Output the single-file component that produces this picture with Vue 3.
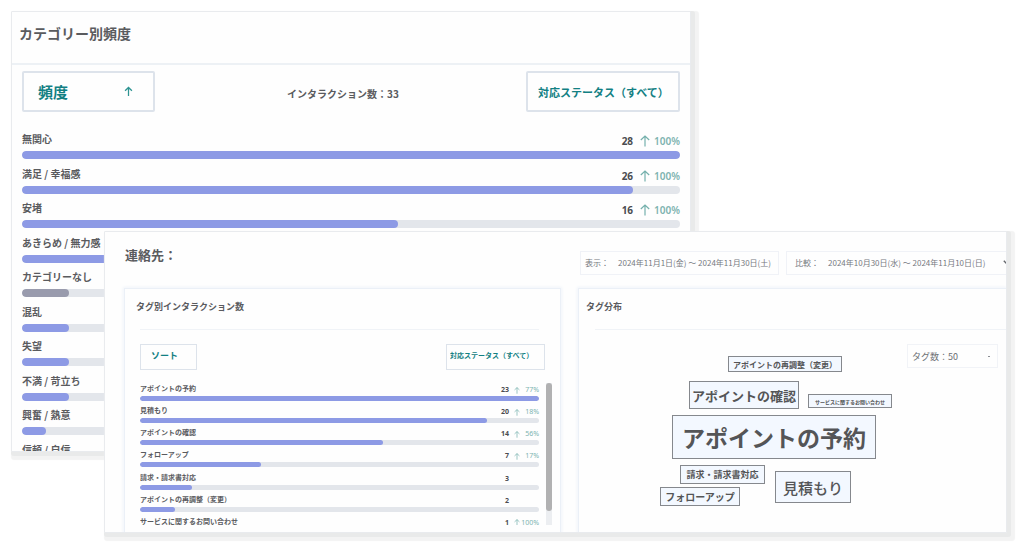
<script setup>
import { ref } from 'vue'

const categories = [
  { label: '無関心', count: 28, change: '100%' },
  { label: '満足 / 幸福感', count: 26, change: '100%' },
  { label: '安堵', count: 16, change: '100%' },
  { label: 'あきらめ / 無力感', count: 8 },
  { label: 'カテゴリーなし', count: 2, muted: true },
  { label: '混乱', count: 2 },
  { label: '失望', count: 2 },
  { label: '不満 / 苛立ち', count: 2 },
  { label: '興奮 / 熱意', count: 1 },
  { label: '信頼 / 自信', count: 1 },
]

const tags = [
  { label: 'アポイントの予約', count: 23, change: '77%' },
  { label: '見積もり', count: 20, change: '18%' },
  { label: 'アポイントの確認', count: 14, change: '56%' },
  { label: 'フォローアップ', count: 7, change: '17%' },
  { label: '請求・請求書対応', count: 3 },
  { label: 'アポイントの再調整（変更）', count: 2 },
  { label: 'サービスに関するお問い合わせ', count: 1, change: '100%' },
]

const share = (rows, row) => ({ width: (row.count / rows[0].count) * 100 + '%' })

const categoryStatus = ref('all')
const tagStatus = ref('all')
const tagLimit = ref('50')
</script>

<template>
  <main class="desktop">
    <section class="window categories">
      <header class="categories-header">
        <h2>カテゴリー別頻度</h2>
      </header>
      <div class="toolbar">
        <button type="button" class="control sort-frequency">
          <span>頻度</span>
          <svg class="sort-arrow" viewBox="0 0 10 12" aria-hidden="true">
            <path d="M5 11V1.5M1.2 5.2 5 1.5l3.8 3.7" />
          </svg>
        </button>
        <p class="total">インタラクション数：33</p>
        <select v-model="categoryStatus" class="control status" aria-label="対応ステータス">
          <option value="all">対応ステータス（すべて）</option>
        </select>
      </div>
      <ul class="rows category-rows">
        <li v-for="row in categories" :key="row.label">
          <div class="row-head">
            <span class="row-label">{{ row.label }}</span>
            <span v-if="row.change" class="row-values">
              <span class="count">{{ row.count }}</span>
              <svg class="arrow" viewBox="0 0 10 12" aria-hidden="true">
                <path d="M5 11.5V1M.8 5 5 1l4.2 4" />
              </svg>
              <span class="change">{{ row.change }}</span>
            </span>
          </div>
          <div class="bar">
            <div class="fill" :class="{ muted: row.muted }" :style="share(categories, row)"></div>
          </div>
        </li>
      </ul>
    </section>

    <section class="window contacts">
      <header class="contacts-header">
        <h2>連絡先：</h2>
        <div class="dates">
          <button type="button" class="date">
            <span>表示：</span>
            <span>2024年11月1日(金) ～ 2024年11月30日(土)</span>
          </button>
          <button type="button" class="date compare">
            <span>比較：</span>
            <span>2024年10月30日(水) ～ 2024年11月10日(日)</span>
            <svg class="chevron" viewBox="0 0 6 4" aria-hidden="true">
              <path d="M.8.8 3 3 5.2.8" />
            </svg>
          </button>
        </div>
      </header>
      <div class="panels">
        <article class="panel">
          <h3>タグ別インタラクション数</h3>
          <div class="panel-tools">
            <button type="button" class="control sort-tags">ソート</button>
            <select v-model="tagStatus" class="control tag-status" aria-label="対応ステータス">
              <option value="all">対応ステータス（すべて）</option>
            </select>
          </div>
          <div class="scroll-area">
            <ul class="rows tag-rows">
              <li v-for="row in tags" :key="row.label">
                <div class="row-head">
                  <span class="row-label">{{ row.label }}</span>
                  <span class="row-values">
                    <span class="count">{{ row.count }}</span>
                    <svg v-if="row.change" class="arrow" viewBox="0 0 10 12" aria-hidden="true">
                      <path d="M5 11.5V1M.8 5 5 1l4.2 4" />
                    </svg>
                    <span class="change">{{ row.change }}</span>
                  </span>
                </div>
                <div class="bar">
                  <div class="fill" :style="share(tags, row)"></div>
                </div>
              </li>
            </ul>
            <div class="scrollbar"><div class="thumb"></div></div>
          </div>
        </article>
        <article class="panel distribution">
          <h3>タグ分布</h3>
          <div class="cloud-area">
            <div class="cloud">
              <span class="tag reschedule">アポイントの再調整（変更）</span>
              <span class="tag confirm">アポイントの確認</span>
              <span class="tag inquiry">サービスに関するお問い合わせ</span>
              <span class="tag booking">アポイントの予約</span>
              <span class="tag billing">請求・請求書対応</span>
              <span class="tag follow">フォローアップ</span>
              <span class="tag quote">見積もり</span>
            </div>
            <div class="limit-field">
              <select v-model="tagLimit" class="limit" aria-label="タグ数">
                <option value="50">タグ数：50</option>
              </select>
              <i class="limit-mark"></i>
            </div>
          </div>
        </article>
      </div>
    </section>
  </main>
</template>

<style>
body {
  background: #fff;
}
</style>

<style scoped>
.desktop {
  position: relative;
  min-height: 100vh;
  overflow: hidden;
  color: #5a5b5e;
  font-family: 'Noto Sans CJK JP', sans-serif;
}

.desktop * {
  box-sizing: border-box;
}

h2,
h3,
p,
ul {
  margin: 0;
  padding: 0;
}

ul {
  list-style: none;
}

button,
select {
  margin: 0;
  font-family: inherit;
  appearance: none;
  background: #fefefe;
  cursor: pointer;
}

.window {
  position: absolute;
  overflow: hidden;
  background: #fefefe;
  border: 1px solid #e9ebee;
  border-radius: 1px;
  box-shadow: 2px 2px 0 2px #e9eaea, 4px 4px 1px 4px #f3f3f3;
}

.categories {
  top: 11px;
  left: 11px;
  right: 333px;
  height: 441px;
}

.contacts {
  top: 231px;
  left: 104px;
  right: 17px;
  height: 302px;
}

.categories-header {
  padding: 9px 7px 18px;
  border-bottom: 2px solid #edf1f5;
}

.categories-header h2 {
  font-size: 14px;
  line-height: 24px;
  font-weight: 700;
}

.toolbar {
  display: flex;
  align-items: center;
  justify-content: space-between;
  padding: 6px 10px 0;
}

.control {
  color: #128083;
  font-weight: 700;
  border: 2px solid #dde3eb;
  border-radius: 2px;
}

.sort-frequency {
  display: flex;
  align-items: center;
  justify-content: space-between;
  width: 133px;
  height: 41px;
  padding: 0 20px 0 14px;
  font-size: 15px;
}

.sort-arrow {
  width: 9px;
  height: 11px;
}

svg {
  fill: none;
  stroke: #2e9492;
  stroke-width: 1.4;
}

.total {
  padding: 5px 0 0 5px;
  font-size: 10px;
  line-height: 14px;
  font-weight: 700;
}

.status {
  width: 154px;
  height: 41px;
  padding: 0 10px;
  font-size: 11px;
}

.rows {
  display: grid;
  grid-auto-rows: 1fr;
}

.row-head {
  display: flex;
  justify-content: space-between;
}

.row-label {
  align-self: flex-start;
  font-weight: 700;
}

.row-values {
  display: flex;
  align-self: flex-end;
  align-items: center;
  font-family: 'Noto Sans', 'Noto Sans CJK JP', sans-serif;
}

.count {
  font-weight: 700;
  color: #4b4c50;
}

.change {
  color: #7db3b0;
  text-align: right;
}

.arrow {
  stroke: #74b0ac;
  stroke-width: 1.2;
}

.bar {
  overflow: hidden;
  background: #e3e6eb;
  border-radius: 4px;
}

.fill {
  height: 100%;
  background: #8d9ae5;
  border-radius: 4px;
}

.fill.muted {
  background: #999bad;
}

.category-rows {
  height: 345px;
  margin-top: 20px;
  padding: 0 10px;
}

.category-rows .row-head {
  height: 16px;
  font-size: 10px;
  line-height: 14px;
}

.category-rows .bar {
  height: 8px;
  margin-top: 3px;
}

.category-rows .arrow {
  width: 10px;
  height: 12px;
  margin: 0 4px 0 7px;
}

.category-rows .change {
  font-weight: 600;
}

.contacts-header {
  display: flex;
  align-items: flex-start;
  justify-content: space-between;
  height: 56px;
  padding: 11px 0 0 20px;
}

.contacts-header h2 {
  font-size: 13px;
  line-height: 24px;
  font-weight: 700;
}

.dates {
  display: flex;
  gap: 7px;
  padding-top: 8px;
}

.date {
  display: flex;
  align-items: center;
  gap: 9px;
  width: 199px;
  height: 24px;
  padding: 0 4px 2px;
  color: #76797e;
  font-size: 8px;
  white-space: nowrap;
  border: 1px solid #f0f2f7;
}

.date.compare {
  width: 220px;
  padding: 0 0 2px 8px;
  border-right: 0;
}

.chevron {
  flex: none;
  width: 6px;
  height: 4px;
  margin: 0 -3px 0 auto;
  stroke: #65686d;
}

.panels {
  display: grid;
  grid-template-columns: 437fr 428fr;
  gap: 17px;
  height: 245px;
  padding-left: 19px;
}

.panel {
  min-width: 0;
  padding: 0 8px 0 11px;
  border: 1px solid #ebf0f7;
  border-bottom: 0;
  box-shadow: 0 0 3px 1px #f0f4fa;
}

.panel h3 {
  font-size: 9px;
  line-height: 14px;
  font-weight: 700;
  padding: 11px 0 15px;
}

.panel-tools {
  display: flex;
  justify-content: space-between;
  margin-left: 4px;
  margin-right: 7px;
  padding-top: 15px;
  position: relative;
}

.panel-tools::before {
  content: '';
  position: absolute;
  top: 0;
  left: 0;
  right: 6px;
  border-top: 1px solid #f0f3f7;
}

.panel-tools .control {
  height: 26px;
  border-width: 1px;
  border-radius: 0;
}

.sort-tags {
  width: 57px;
  padding: 0 10px 4px;
  font-size: 9px;
  text-align: left;
}

.tag-status {
  width: 99px;
  padding: 0 3px 5px;
  font-size: 7px;
}

.scroll-area {
  display: flex;
  gap: 7px;
  height: 142px;
  margin: 13px 0 0 4px;
  overflow: hidden;
}

.tag-rows {
  flex: 1;
  height: 155px;
}

.tag-rows .row-head {
  height: 12px;
  font-size: 7px;
  line-height: 10px;
}

.tag-rows .bar {
  height: 5px;
  margin-top: 1px;
}

.tag-rows .arrow {
  width: 6px;
  height: 7px;
  margin-left: 5px;
}

.tag-rows .change {
  width: 19px;
}

.tag-rows .count:has(+ .change) {
  margin-right: 11px;
}

.scrollbar {
  width: 6px;
  background: #eceef1;
}

.thumb {
  height: 128px;
  background: #b1b1b2;
  border-radius: 3px;
}

.distribution {
  padding: 0 0 0 7px;
  border-right: 0;
}

.cloud-area {
  display: flex;
  align-items: flex-start;
  justify-content: space-between;
  margin-left: 9px;
  padding: 14px 8px 0 65px;
  border-top: 1px solid #f0f3f7;
}

.cloud {
  position: relative;
  width: 232px;
  height: 163px;
}

.tag {
  position: absolute;
  display: flex;
  align-items: center;
  justify-content: center;
  color: #545557;
  font-weight: 700;
  white-space: nowrap;
  background: #f3f8ff;
  border: 1px solid #85888d;
}

.reschedule {
  top: 12px;
  left: 68px;
  width: 114px;
  height: 16px;
  font-size: 8px;
}

.confirm {
  top: 37px;
  left: 29px;
  width: 110px;
  height: 28px;
  font-size: 13px;
}

.inquiry {
  top: 50px;
  left: 148px;
  width: 84px;
  height: 14px;
  font-size: 5px;
}

.booking {
  top: 71px;
  left: 12px;
  width: 204px;
  height: 44px;
  font-size: 23px;
}

.billing {
  top: 121px;
  left: 20px;
  width: 85px;
  height: 19px;
  font-size: 9px;
}

.follow {
  top: 143px;
  left: 0;
  width: 80px;
  height: 19px;
  font-size: 10px;
}

.quote {
  top: 127px;
  left: 115px;
  width: 76px;
  height: 32px;
  font-size: 15px;
  font-weight: 500;
}

.limit-field {
  display: grid;
  align-items: center;
  width: 91px;
}

.limit,
.limit-mark {
  grid-area: 1 / 1;
}

.limit {
  height: 24px;
  padding: 0 4px;
  color: #6b6e73;
  font-size: 9px;
  border: 1px solid #f1f3f7;
}

.limit-mark {
  justify-self: end;
  width: 2px;
  height: 1px;
  margin-right: 8px;
  background: #8b8e94;
  pointer-events: none;
}
</style>
